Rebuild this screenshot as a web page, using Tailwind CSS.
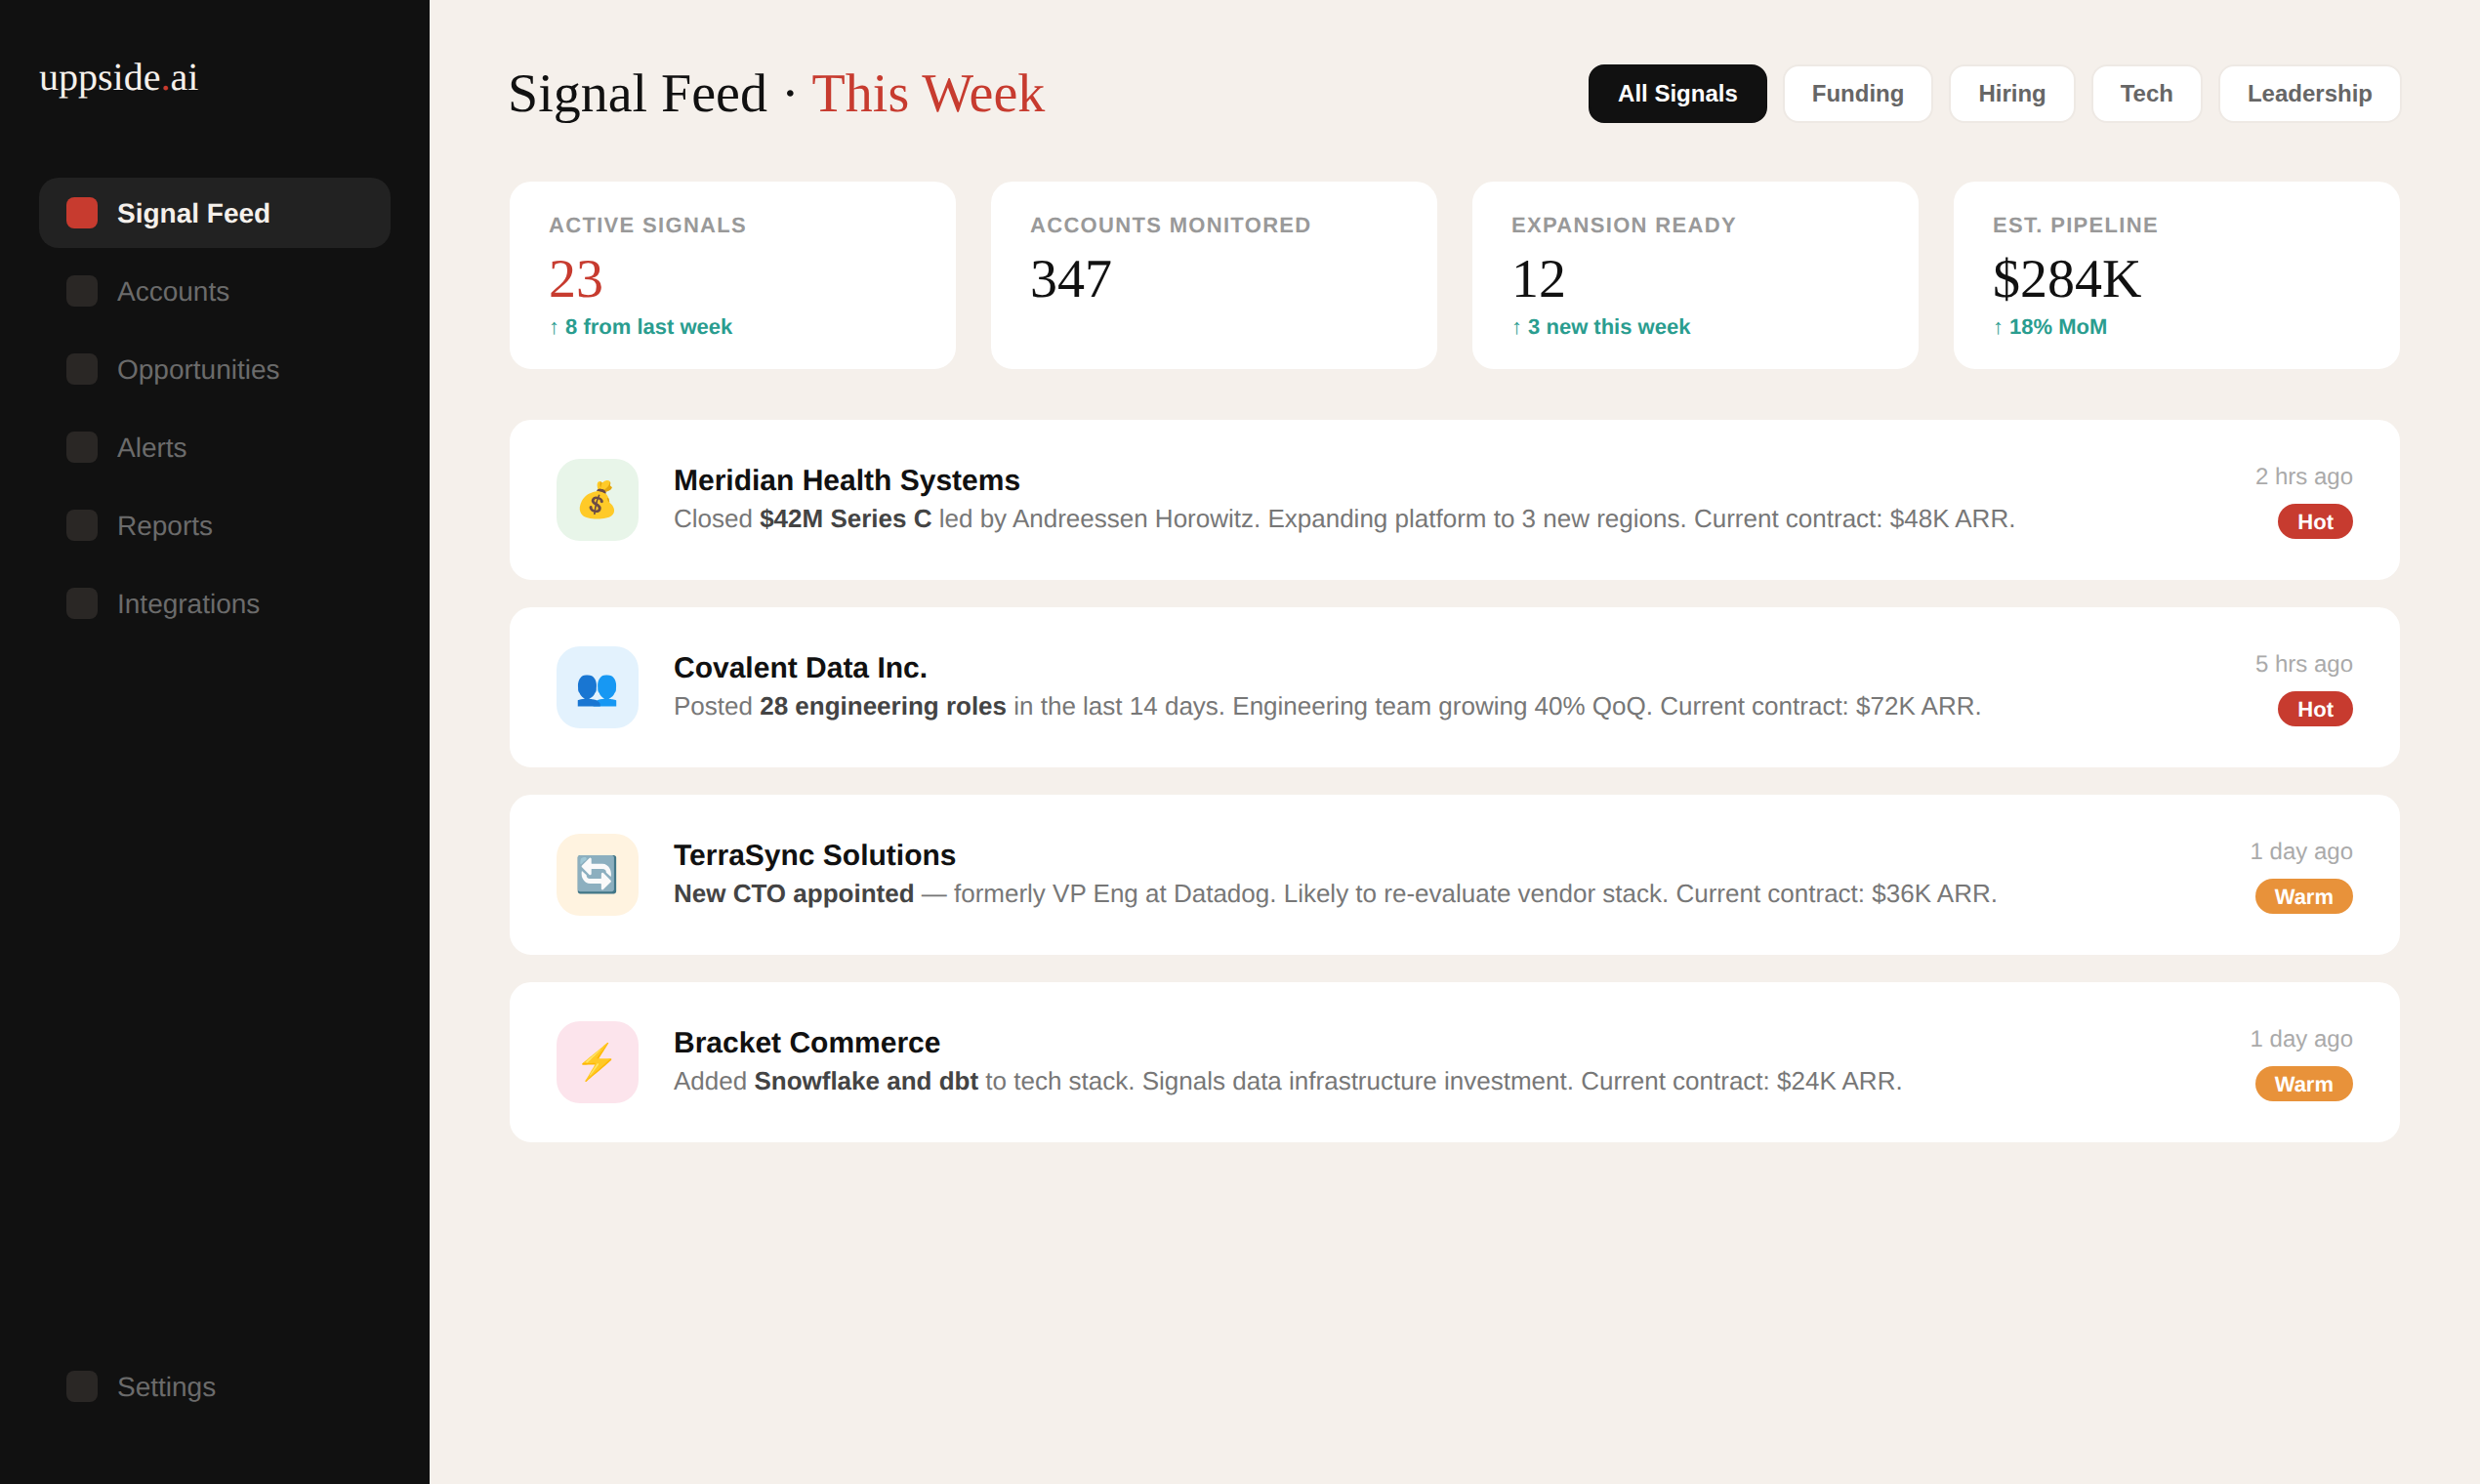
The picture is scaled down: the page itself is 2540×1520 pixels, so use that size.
<!DOCTYPE html>
<html lang="en">
<head>
    <meta charset="UTF-8">
    <meta name="viewport" content="width=device-width, initial-scale=1.0">
    <title>Signal Feed</title>
    <script src="https://cdn.jsdelivr.net/npm/@tailwindcss/browser@4"></script>
</head>
<body class="bg-[#f5f0eb] font-['Liberation_Sans',Arial,sans-serif] text-[#111111] [text-rendering:geometricPrecision]">
    <div class="flex h-[1520px] w-[2540px] overflow-hidden">
        <!-- sidebar -->
        <aside class="flex w-[440px] shrink-0 flex-col bg-[#111111] px-[40px] pt-[57px] pb-[64px]">
            <div class="mb-[81px] h-[44px] font-['Liberation_Serif',serif] text-[40px] leading-[44px] text-[#f5f0eb]">uppside<span class="text-[#c73b2f]">.</span>ai</div>
            <nav class="flex flex-1 flex-col gap-[8px]">
                <a class="flex h-[72px] items-center gap-[20px] rounded-[20px] bg-[#222222] px-[28px] text-[28px] font-semibold text-[#f5f0eb]"><span class="size-[32px] rounded-[8px] bg-[#c73b2f]"></span><span class="mt-[2px]">Signal Feed</span></a>
                <a class="flex h-[72px] items-center gap-[20px] rounded-[20px] px-[28px] text-[28px] text-[#6b6b6b]"><span class="size-[32px] rounded-[8px] bg-[#2a2725]"></span><span class="mt-[2px]">Accounts</span></a>
                <a class="flex h-[72px] items-center gap-[20px] rounded-[20px] px-[28px] text-[28px] text-[#6b6b6b]"><span class="size-[32px] rounded-[8px] bg-[#2a2725]"></span><span class="mt-[2px]">Opportunities</span></a>
                <a class="flex h-[72px] items-center gap-[20px] rounded-[20px] px-[28px] text-[28px] text-[#6b6b6b]"><span class="size-[32px] rounded-[8px] bg-[#2a2725]"></span><span class="mt-[2px]">Alerts</span></a>
                <a class="flex h-[72px] items-center gap-[20px] rounded-[20px] px-[28px] text-[28px] text-[#6b6b6b]"><span class="size-[32px] rounded-[8px] bg-[#2a2725]"></span><span class="mt-[2px]">Reports</span></a>
                <a class="flex h-[72px] items-center gap-[20px] rounded-[20px] px-[28px] text-[28px] text-[#6b6b6b]"><span class="size-[32px] rounded-[8px] bg-[#2a2725]"></span><span class="mt-[2px]">Integrations</span></a>
                <a class="mt-auto flex h-[72px] items-center gap-[20px] rounded-[20px] px-[28px] text-[28px] text-[#6b6b6b]"><span class="size-[32px] rounded-[8px] bg-[#2a2725]"></span><span class="mt-[2px]">Settings</span></a>
            </nav>
        </aside>

        <!-- main -->
        <main class="flex-1 px-[80px] pt-[59px]">
            <header class="mb-[53px] flex h-[72px] items-center justify-between">
                <h1 class="mt-[2px] font-['Liberation_Serif',serif] text-[56px] leading-[72px] font-normal">Signal Feed · <span class="text-[#c73b2f]">This Week</span></h1>
                <div class="mt-[2px] flex items-center gap-[16px]">
                    <button class="h-[60px] rounded-[16px] border-2 border-[#111111] bg-[#111111] px-[28px] text-[24px] font-semibold text-white">All Signals</button>
                    <button class="h-[60px] rounded-[16px] border-2 border-[#eee9e4] bg-white px-[28px] text-[24px] font-semibold text-[#666666]">Funding</button>
                    <button class="h-[60px] rounded-[16px] border-2 border-[#eee9e4] bg-white px-[28px] text-[24px] font-semibold text-[#666666]">Hiring</button>
                    <button class="h-[60px] rounded-[16px] border-2 border-[#eee9e4] bg-white px-[28px] text-[24px] font-semibold text-[#666666]">Tech</button>
                    <button class="h-[60px] rounded-[16px] border-2 border-[#eee9e4] bg-white px-[28px] text-[24px] font-semibold text-[#666666]">Leadership</button>
                </div>
            </header>

            <section class="mb-[48px] grid grid-cols-4 gap-[32px]">
                <div class="h-[196px] rounded-[24px] border-2 border-[#f5f0eb] bg-white px-[40px] pt-[31px]">
                    <div class="text-[22px] leading-[28px] font-semibold tracking-[0.06em] text-[#999999]">ACTIVE SIGNALS</div>
                    <div class="mt-[11px] font-['Liberation_Serif',serif] text-[56px] leading-[60px] text-[#c73b2f]">23</div>
                    <div class="mt-[5px] text-[22px] leading-[28px] font-semibold text-[#2a9d8f]">↑ 8 from last week</div>
                </div>
                <div class="h-[196px] rounded-[24px] border-2 border-[#f5f0eb] bg-white px-[40px] pt-[31px]">
                    <div class="text-[22px] leading-[28px] font-semibold tracking-[0.06em] text-[#999999]">ACCOUNTS MONITORED</div>
                    <div class="mt-[11px] font-['Liberation_Serif',serif] text-[56px] leading-[60px]">347</div>
                </div>
                <div class="h-[196px] rounded-[24px] border-2 border-[#f5f0eb] bg-white px-[40px] pt-[31px]">
                    <div class="text-[22px] leading-[28px] font-semibold tracking-[0.06em] text-[#999999]">EXPANSION READY</div>
                    <div class="mt-[11px] font-['Liberation_Serif',serif] text-[56px] leading-[60px]">12</div>
                    <div class="mt-[5px] text-[22px] leading-[28px] font-semibold text-[#2a9d8f]">↑ 3 new this week</div>
                </div>
                <div class="h-[196px] rounded-[24px] border-2 border-[#f5f0eb] bg-white px-[40px] pt-[31px]">
                    <div class="text-[22px] leading-[28px] font-semibold tracking-[0.06em] text-[#999999]">EST. PIPELINE</div>
                    <div class="mt-[11px] font-['Liberation_Serif',serif] text-[56px] leading-[60px]">$284K</div>
                    <div class="mt-[5px] text-[22px] leading-[28px] font-semibold text-[#2a9d8f]">↑ 18% MoM</div>
                </div>
            </section>

            <section class="flex flex-col gap-[24px]">
                <article class="flex h-[168px] items-center gap-[36px] rounded-[24px] border-2 border-[#f5f0eb] bg-white px-[48px]">
                    <div class="flex size-[84px] shrink-0 items-center justify-center rounded-[24px] bg-[#e8f5e9] text-[36px]">💰</div>
                    <div class="min-w-0 flex-1">
                        <div class="text-[30px] leading-[38px] font-semibold">Meridian Health Systems</div>
                        <div class="text-[26px] leading-[38px] text-[#777777]">Closed <strong class="font-semibold text-[#444444]">$42M Series C</strong> led by Andreessen Horowitz. Expanding platform to 3 new regions. Current contract: $48K ARR.</div>
                    </div>
                    <div class="flex shrink-0 flex-col items-end gap-[10px]">
                        <div class="text-[24px] leading-[34px] text-[#aaaaaa]">2 hrs ago</div>
                        <span class="flex h-[36px] items-center rounded-full bg-[#c73b2f] px-[20px] text-[22px] font-semibold text-white">Hot</span>
                    </div>
                </article>
                <article class="flex h-[168px] items-center gap-[36px] rounded-[24px] border-2 border-[#f5f0eb] bg-white px-[48px]">
                    <div class="flex size-[84px] shrink-0 items-center justify-center rounded-[24px] bg-[#e3f2fd] text-[36px]">👥</div>
                    <div class="min-w-0 flex-1">
                        <div class="text-[30px] leading-[38px] font-semibold">Covalent Data Inc.</div>
                        <div class="text-[26px] leading-[38px] text-[#777777]">Posted <strong class="font-semibold text-[#444444]">28 engineering roles</strong> in the last 14 days. Engineering team growing 40% QoQ. Current contract: $72K ARR.</div>
                    </div>
                    <div class="flex shrink-0 flex-col items-end gap-[10px]">
                        <div class="text-[24px] leading-[34px] text-[#aaaaaa]">5 hrs ago</div>
                        <span class="flex h-[36px] items-center rounded-full bg-[#c73b2f] px-[20px] text-[22px] font-semibold text-white">Hot</span>
                    </div>
                </article>
                <article class="flex h-[168px] items-center gap-[36px] rounded-[24px] border-2 border-[#f5f0eb] bg-white px-[48px]">
                    <div class="flex size-[84px] shrink-0 items-center justify-center rounded-[24px] bg-[#fff3e0] text-[36px]">🔄</div>
                    <div class="min-w-0 flex-1">
                        <div class="text-[30px] leading-[38px] font-semibold">TerraSync Solutions</div>
                        <div class="text-[26px] leading-[38px] text-[#777777]"><strong class="font-semibold text-[#444444]">New CTO appointed</strong> — formerly VP Eng at Datadog. Likely to re-evaluate vendor stack. Current contract: $36K ARR.</div>
                    </div>
                    <div class="flex shrink-0 flex-col items-end gap-[10px]">
                        <div class="text-[24px] leading-[34px] text-[#aaaaaa]">1 day ago</div>
                        <span class="flex h-[36px] items-center rounded-full bg-[#e8923a] px-[20px] text-[22px] font-semibold text-white">Warm</span>
                    </div>
                </article>
                <article class="flex h-[168px] items-center gap-[36px] rounded-[24px] border-2 border-[#f5f0eb] bg-white px-[48px]">
                    <div class="flex size-[84px] shrink-0 items-center justify-center rounded-[24px] bg-[#fce4ec] text-[36px]">⚡</div>
                    <div class="min-w-0 flex-1">
                        <div class="text-[30px] leading-[38px] font-semibold">Bracket Commerce</div>
                        <div class="text-[26px] leading-[38px] text-[#777777]">Added <strong class="font-semibold text-[#444444]">Snowflake and dbt</strong> to tech stack. Signals data infrastructure investment. Current contract: $24K ARR.</div>
                    </div>
                    <div class="flex shrink-0 flex-col items-end gap-[10px]">
                        <div class="text-[24px] leading-[34px] text-[#aaaaaa]">1 day ago</div>
                        <span class="flex h-[36px] items-center rounded-full bg-[#e8923a] px-[20px] text-[22px] font-semibold text-white">Warm</span>
                    </div>
                </article>
            </section>
        </main>
    </div>
</body>
</html>
